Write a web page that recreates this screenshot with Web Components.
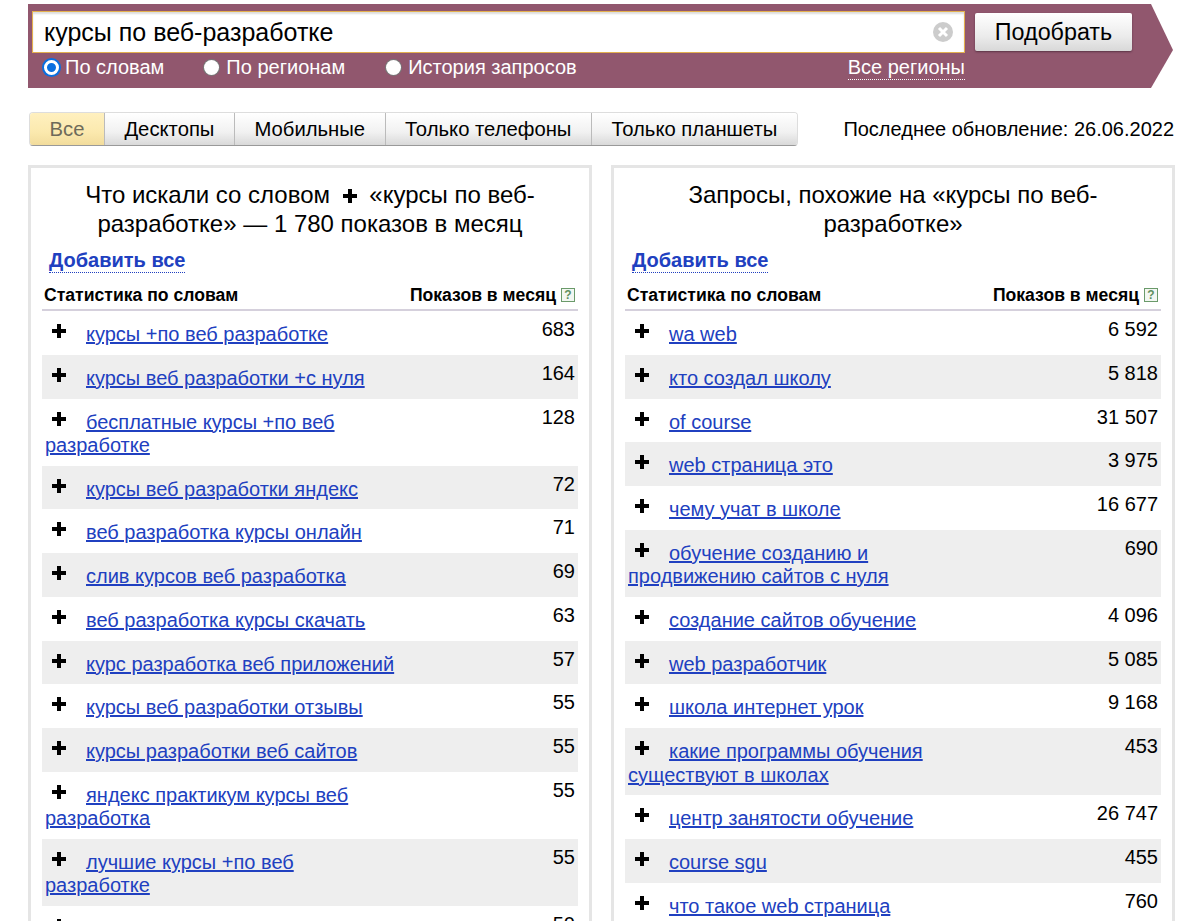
<!DOCTYPE html>
<html lang="ru">
<head>
<meta charset="utf-8">
<title>Подбор слов</title>
<style>
html, body { margin: 0; height: 921px; overflow: hidden; background: #fff; }
body { font-family: "Liberation Sans", Arial, sans-serif; color: #000; }
wordstat-page { display: block; }
</style>
</head>
<body>
<wordstat-page></wordstat-page>

<script>
const LEFT_ROWS = [
    ['курсы +по веб разработке', '683'],
    ['курсы веб разработки +с нуля', '164'],
    ['бесплатные курсы +по веб разработке', '128'],
    ['курсы веб разработки яндекс', '72'],
    ['веб разработка курсы онлайн', '71'],
    ['слив курсов веб разработка', '69'],
    ['веб разработка курсы скачать', '63'],
    ['курс разработка веб приложений', '57'],
    ['курсы веб разработки отзывы', '55'],
    ['курсы разработки веб сайтов', '55'],
    ['яндекс практикум курсы веб разработка', '55'],
    ['лучшие курсы +по веб разработке', '55'],
    ['яндекс веб разработка', '50']
];

const RIGHT_ROWS = [
    ['wa web', '6 592'],
    ['кто создал школу', '5 818'],
    ['of course', '31 507'],
    ['web страница это', '3 975'],
    ['чему учат в школе', '16 677'],
    ['обучение созданию и продвижению сайтов с нуля', '690'],
    ['создание сайтов обучение', '4 096'],
    ['web разработчик', '5 085'],
    ['школа интернет урок', '9 168'],
    ['какие программы обучения существуют в школах', '453'],
    ['центр занятости обучение', '26 747'],
    ['course sgu', '455'],
    ['что такое web страница', '760']
];

const PLUS = `<svg width="14" height="14" viewBox="0 0 14 14" aria-hidden="true"><path d="M5 0h4v5h5v4H9v5H5V9H0V5h5z" fill="#000"/></svg>`;

class BaseElement extends HTMLElement {
    constructor() {
        super();
        this.attachShadow({ mode: 'open' });
    }

    connectedCallback() {
        this.shadowRoot.innerHTML = `<style>${this.constructor.styles}</style>${this.render()}`;
    }
}

class SearchBar extends BaseElement {
    static get styles() {
        return `
        :host { display: block; margin: 4px 0 0 28px; width: 1145px; height: 84px; }
        .band {
            height: 84px; box-sizing: border-box; padding: 7px 0 0 4px;
            background: #91576e;
            clip-path: polygon(0 0, 1123px 0, 1145px 46px, 1123px 84px, 0 84px);
        }
        .top { display: flex; align-items: flex-start; }
        .input {
            width: 933px; height: 42px; box-sizing: border-box;
            display: flex; align-items: center; justify-content: space-between;
            padding: 0 11px 0 11px;
            background: #fff; border: 1px solid #e3b04e; box-shadow: inset 0 2px 2px #ddd;
            font-size: 25px; color: #000;
        }
        button {
            margin: 2px 0 0 10px; width: 157px; height: 38px; padding: 0;
            font: 23.3px "Liberation Sans", Arial, sans-serif; color: #000;
            border: 0; border-radius: 2px;
            background: linear-gradient(#fff, #ececec 60%, #d8d8d8);
            box-shadow: 0 1px 2px #5a3345;
        }
        .bottom { display: flex; align-items: center; height: 29px; color: #fff; font-size: 20px; }
        label { display: flex; align-items: center; }
        .radio { width: 15px; height: 15px; margin-right: 7px; border-radius: 50%; background: #fff; box-shadow: 0 0 0 1px #777; display: block; }
        .radio.on { width: 9px; height: 9px; margin-right: 6px; border: 3px solid #fff; box-shadow: 0 0 0 2px #0a6fe0; background: #0a6fe0; }
        .l1 { margin-left: 12px; }
        .l2 { margin-left: 40px; }
        .l3 { margin-left: 41px; }
        .regions { margin-left: auto; margin-right: 208px; border-bottom: 1px dotted #fff; line-height: 24px; }
        `;
    }

    render() {
        return `<div class="band">
            <div class="top">
                <div class="input"><span>курсы по веб-разработке</span>
                    <svg width="20" height="20" viewBox="0 0 20 20" aria-hidden="true"><circle cx="10" cy="10" r="10" fill="#ccc"/><path d="M6 6l8 8M14 6l-8 8" stroke="#fff" stroke-width="3"/></svg>
                </div>
                <button>Подобрать</button>
            </div>
            <div class="bottom">
                <label class="l1"><span class="radio on"></span>По словам</label>
                <label class="l2"><span class="radio"></span>По регионам</label>
                <label class="l3"><span class="radio"></span>История запросов</label>
                <span class="regions">Все регионы</span>
            </div>
        </div>`;
    }
}

class DeviceTabs extends BaseElement {
    static get styles() {
        return `
        :host { display: flex; align-items: center; justify-content: space-between; margin: 24px 15px 0 29px; height: 34px; }
        .tabs { display: flex; height: 34px; box-sizing: border-box; border: 1px solid #ddd; border-bottom: 1px solid #999; border-radius: 4px; overflow: hidden; font-size: 20.25px; }
        .tab { display: flex; align-items: center; padding: 0 19.5px; background: linear-gradient(#fff, #f1f1f1 60%, #d9d9d9); border-right: 1px solid #bbb; }
        .tab:last-child { border-right: 0; }
        .tab.on { background: linear-gradient(#fff0bf, #fbe9ae 60%, #f2dc9c); color: #6e6a5a; }
        .date { font-size: 20px; }
        `;
    }

    render() {
        const names = ['Все', 'Десктопы', 'Мобильные', 'Только телефоны', 'Только планшеты'];
        return `<div class="tabs">${names.map((n, i) => `<div class="tab${i == 0 ? ' on' : ''}">${n}</div>`).join('')}</div>
        <div class="date">Последнее обновление: 26.06.2022</div>`;
    }
}

class StatRow extends BaseElement {
    static get styles() {
        return `
        :host { display: flex; justify-content: space-between; align-items: flex-start; box-sizing: border-box; padding: 12px 3px 8.35px 3px; font-size: 20px; line-height: 23.4px; }
        :host(:nth-child(even)) { background: #eee; }
        a { color: #2040c0; text-decoration: underline; }
        .text { width: 355px; }
        .plus { display: inline-block; width: 41px; padding-left: 7px; box-sizing: border-box; }
        .plus svg { vertical-align: 3px; }
        .count { margin-top: -5px; }
        `;
    }

    render() {
        return `<div class="text"><span class="plus">${PLUS}</span><a href="#">${this.getAttribute('text')}</a></div>
        <div class="count">${this.getAttribute('count')}</div>`;
    }
}

class StatPanel extends BaseElement {
    static get styles() {
        return `
        :host { display: block; box-sizing: border-box; width: 564px; height: 800px; border: 3px solid #e5e5e5; border-bottom: 0; padding: 0 11px; overflow: hidden; }
        h2 { margin: 12px 0 0; font-size: 24px; font-weight: normal; line-height: 29px; text-align: center; padding: 0 30px; }
        h2 svg { margin: 0 6px; }
        .add { display: block; margin: 11px 0 0 7px; width: fit-content; font-size: 20px; font-weight: bold; color: #2040c0; border-bottom: 1px dotted #2040c0; line-height: 23px; }
        .head { display: flex; justify-content: space-between; align-items: center; margin-top: 9px; height: 27px; padding: 0 3px 0 2px; border-bottom: 2px solid #d5d0dc; font-size: 17.6px; font-weight: bold; }
        .q { display: inline-block; width: 12px; height: 12px; margin-left: 5px; border: 1px solid #6a9a6a; background: #f2f7f2; color: #5f8f5f; font-size: 12px; line-height: 12px; text-align: center; vertical-align: 2px; }
        `;
    }

    render() {
        return `<h2>${this.getAttribute('heading').replace('+', PLUS)}</h2>
        <span class="add">Добавить все</span>
        <div class="head"><span>Статистика по словам</span><span>Показов в месяц<span class="q">?</span></span></div>
        <slot></slot>`;
    }
}

class WordstatPage extends BaseElement {
    static get styles() {
        return `
        :host { display: block; }
        .panels { display: flex; gap: 19px; margin: 19px 0 0 28px; }
        `;
    }

    rows(list) {
        return list.map(([t, c]) => `<stat-row text="${t}" count="${c}"></stat-row>`).join('');
    }

    render() {
        return `<search-bar></search-bar>
        <device-tabs></device-tabs>
        <div class="panels">
            <stat-panel heading="Что искали со словом + «курсы по веб-разработке» — 1 780 показов в месяц">${this.rows(LEFT_ROWS)}</stat-panel>
            <stat-panel heading="Запросы, похожие на «курсы по веб-разработке»">${this.rows(RIGHT_ROWS)}</stat-panel>
        </div>`;
    }
}

customElements.define('search-bar', SearchBar);
customElements.define('device-tabs', DeviceTabs);
customElements.define('stat-row', StatRow);
customElements.define('stat-panel', StatPanel);
customElements.define('wordstat-page', WordstatPage);
</script>
</body>
</html>
